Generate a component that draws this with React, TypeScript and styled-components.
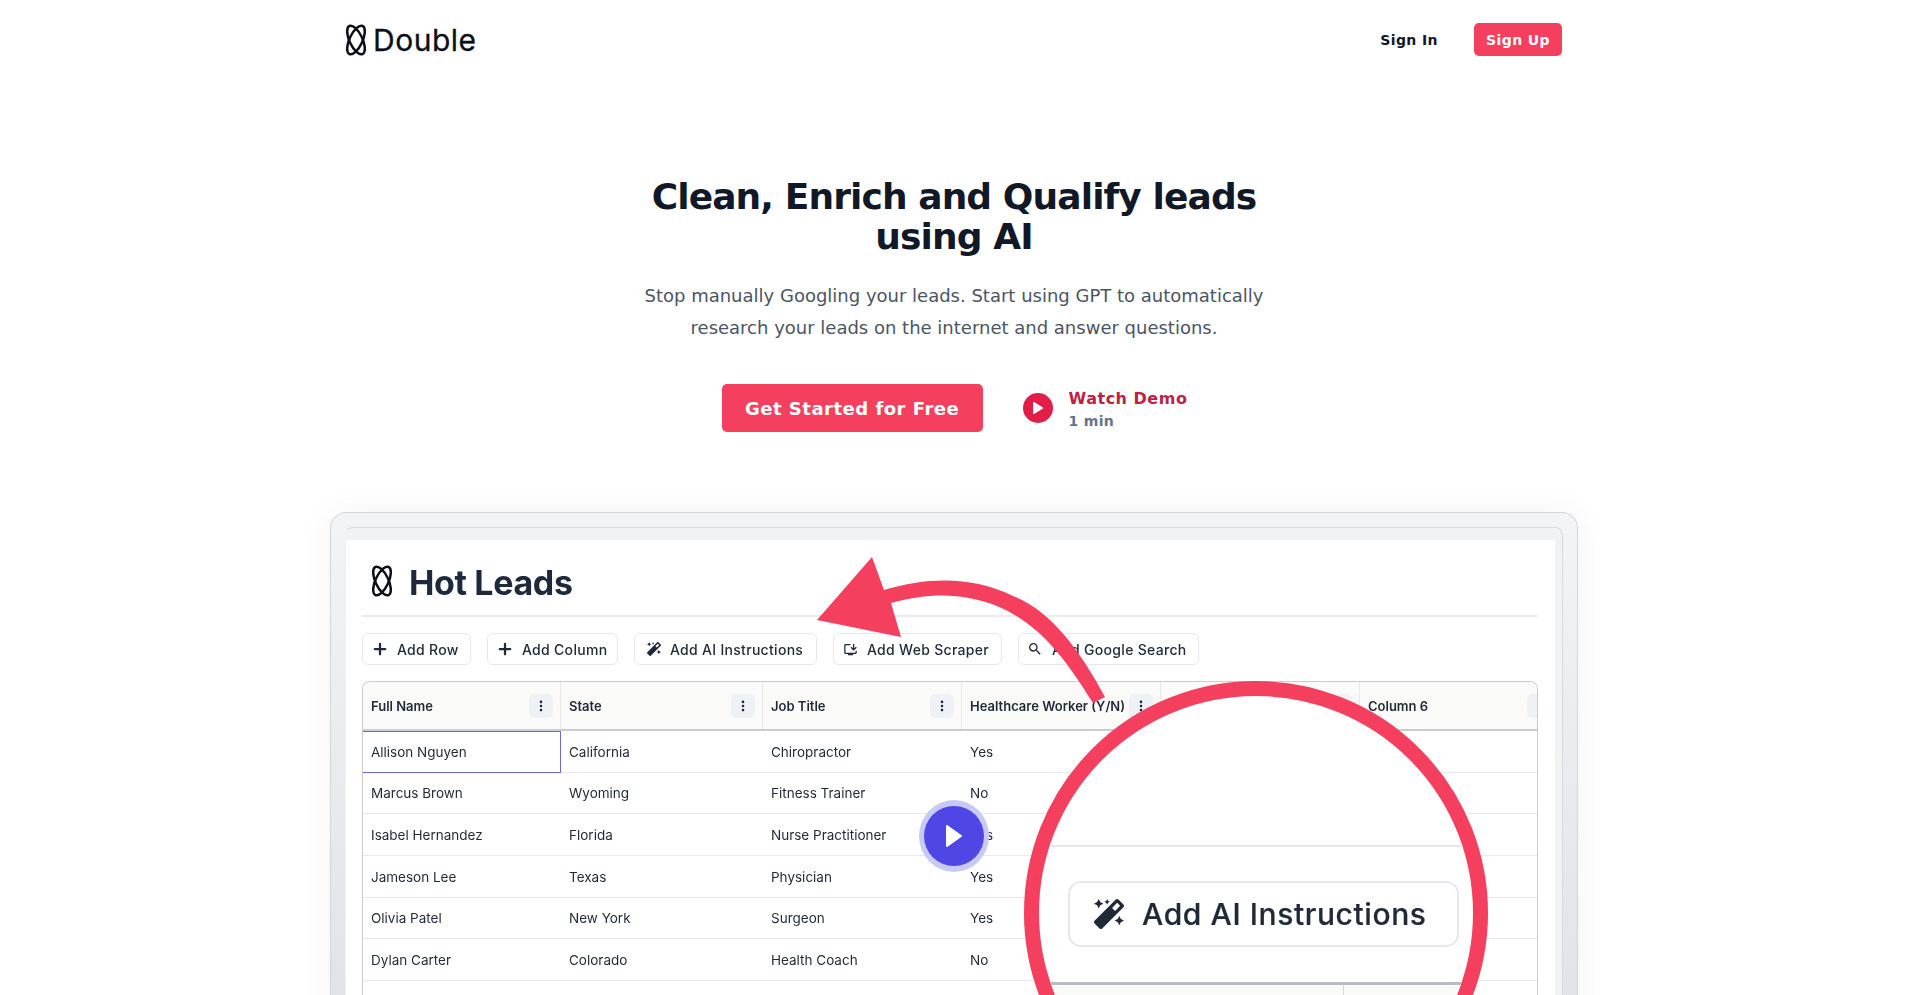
import React from 'react';
import styled, { createGlobalStyle } from 'styled-components';
import { FaMagic } from 'react-icons/fa';
import { MdOutlineInstallDesktop, MdSearch } from 'react-icons/md';
import { Plus, EllipsisVertical } from 'lucide-react';

const Global = createGlobalStyle`
  html, body { margin: 0; padding: 0; background: #fff; height: 995px; overflow: hidden; }
  * { box-sizing: border-box; }
  body { font-family: "DejaVu Sans", sans-serif; }
`;

const Page = styled.div`
  width: 1908px;
  height: 995px;
  overflow: hidden;
`;
const Container = styled.div`
  width: 1280px;
  margin: 0 auto;
  padding: 0 16px;
`;
const Nav = styled.nav`
  height: 80px;
  padding: 0 16px;
  display: flex;
  align-items: center;
  justify-content: space-between;
`;
const Brand = styled.div`
  display: flex;
  align-items: center;
  gap: 7px;
`;
const BrandName = styled.span`
  font-family: Inter, sans-serif;
  font-size: 30px;
  font-weight: 400;
  letter-spacing: 0.5px;
  color: #0b0f19;
  -webkit-text-stroke: 0.3px #0b0f19;
`;
const NavActions = styled.div`
  display: flex;
  align-items: center;
  gap: 36px;
`;
const SignIn = styled.a`
  font-size: 14px;
  font-weight: 700;
  letter-spacing: 0.4px;
  color: #111827;
`;
const SignUp = styled.a`
  height: 33px;
  width: 88px;
  margin-top: -1px;
  display: flex;
  align-items: center;
  justify-content: center;
  font-size: 14px;
  font-weight: 700;
  letter-spacing: 0.4px;
  color: #fff;
  background: #f43f5e;
  border-radius: 5px;
`;
const Hero = styled.section`
  padding-top: 97px;
  display: flex;
  flex-direction: column;
  align-items: center;
`;
const Title = styled.h1`
  margin: 0;
  width: 640px;
  text-align: center;
  font-size: 36px;
  line-height: 40px;
  font-weight: 700;
  letter-spacing: -0.9px;
  color: #111827;
`;
const Lead = styled.p`
  margin: 23px 0 0;
  width: 700px;
  text-align: center;
  font-size: 18px;
  line-height: 32px;
  color: #4b5563;
`;
const Cta = styled.div`
  margin-top: 40px;
  padding-left: 1px;
  display: flex;
  align-items: center;
  gap: 40px;
`;
const Primary = styled.a`
  width: 261px;
  height: 48px;
  display: flex;
  align-items: center;
  justify-content: center;
  background: #f43f5e;
  color: #fff;
  font-size: 18px;
  font-weight: 700;
  letter-spacing: 0.5px;
  border-radius: 5px;
`;
const Demo = styled.a`
  display: flex;
  align-items: center;
  gap: 16px;
`;
const DemoDisc = styled.span`
  width: 30px;
  height: 30px;
  border-radius: 50%;
  background: #e11d48;
  display: flex;
  align-items: center;
  justify-content: center;
`;
const DemoText = styled.span`
  padding-top: 2px;
  display: flex;
  flex-direction: column;
  gap: 1px;
`;
const DemoTitle = styled.span`
  font-size: 16px;
  line-height: 22px;
  font-weight: 700;
  letter-spacing: 0.5px;
  color: #be2148;
`;
const DemoTime = styled.span`
  font-size: 14px;
  line-height: 20px;
  font-weight: 700;
  letter-spacing: 0.3px;
  color: #64748b;
`;
const Frame = styled.div`
  margin-top: 80px;
  width: 1248px;
  border: 1px solid #d4d6da;
  border-bottom: 0;
  border-radius: 16px 16px 0 0;
  padding: 14px 14px 0;
  background: linear-gradient(#f3f4f6, #eceef0 30%, #dfe1e4);
  box-shadow: 0 0 34px rgba(0, 0, 0, 0.05);
`;
const Bezel = styled.div`
  border: 1px solid #d8dadd;
  border-bottom: 0;
  border-left-color: transparent;
  border-radius: 8px 8px 0 0;
  padding: 12px 7px 0 0;
  background: #f1f2f4;
`;
const Screen = styled.div`
  position: relative;
  height: 520px;
  background: #fff;
  padding: 16px 17px 0 16px;
  overflow: hidden;
`;
const Shot = styled.div`
  filter: blur(0.4px);
`;
const SheetHead = styled.div`
  height: 61px;
  border-bottom: 2px solid #e9ebf0;
  display: flex;
  align-items: flex-start;
  gap: 17px;
  padding: 9px 0 0 10px;
`;
const SheetTitle = styled.h2`
  margin: -1px 0 0;
  font-family: Inter, sans-serif;
  font-size: 34px;
  line-height: 38px;
  font-weight: 700;
  letter-spacing: -0.35px;
  color: #1e293b;
`;
const Toolbar = styled.div`
  margin-top: 16px;
  display: flex;
  gap: 16px;
`;
const ToolButton = styled.div<{ $w: number; $pad: number; $gap: number }>`
  width: ${p => p.$w}px;
  height: 32px;
  padding-left: ${p => p.$pad}px;
  display: flex;
  align-items: center;
  gap: ${p => p.$gap}px;
  border: 1px solid #e5e7eb;
  border-radius: 6px;
  font-family: Inter, sans-serif;
  font-size: 14px;
  font-weight: 500;
  letter-spacing: 0.3px;
  color: #1f2937;
  background: #fff;
`;
const Table = styled.div`
  margin-top: 16px;
  width: 1176px;
  border: 1px solid #c9ccd1;
  border-bottom: 0;
  border-radius: 8px 8px 0 0;
  overflow: hidden;
  font-family: Inter, sans-serif;
`;
const Row = styled.div<{ $head?: boolean }>`
  display: grid;
  grid-template-columns: 198px 202px 199px 199px 199px 199px;
  width: 1196px;
  height: ${p => (p.$head ? '49px' : '41.67px')};
  background: ${p => (p.$head ? '#fafaf9' : '#fff')};
  border-bottom: ${p => (p.$head ? '2px solid #c9ccd1' : '1.5px solid #e7e9ee')};
`;
const HeadCell = styled.div`
  display: flex;
  align-items: center;
  justify-content: space-between;
  padding: 0 7px 0 8px;
  border-right: 1px solid #e7e7e6;
  font-size: 13px;
  font-weight: 600;
  color: #1f2937;
  white-space: nowrap;
`;
const Kebab = styled.span`
  width: 24px;
  height: 24px;
  flex: none;
  border-radius: 5px;
  background: #eef2f7;
  display: flex;
  align-items: center;
  justify-content: center;
  color: #1f2937;
`;
const Cell = styled.div<{ $selected?: boolean }>`
  display: flex;
  align-items: center;
  padding: 1px 8px 0;
  font-size: 13.5px;
  color: #1f2937;
  border: ${p => (p.$selected ? '1px solid #6d66d9' : '0')};
  margin: ${p => (p.$selected ? '0 0 -1px -1px' : '0')};
`;
const ArrowLayer = styled.svg`
  position: absolute;
  left: 454px;
  top: 0;
`;
const PlayHalo = styled.div`
  position: absolute;
  left: 573px;
  top: 260px;
  width: 70px;
  height: 72px;
  border-radius: 50%;
  background: #c7c9f6;
  display: flex;
  align-items: center;
  justify-content: center;
`;
const PlayDisc = styled.div`
  width: 60px;
  height: 60px;
  border-radius: 50%;
  background: #4f46e5;
  display: flex;
  align-items: center;
  justify-content: center;
`;
const Lens = styled.div`
  position: absolute;
  left: 678px;
  top: 141px;
  width: 464px;
  height: 464px;
  border-radius: 50%;
  border: 15px solid #f43f5e;
  background: #fff;
  overflow: hidden;
  padding-top: 149px;
`;
const LensInner = styled.div`
  filter: blur(0.6px);
`;
const LensRule = styled.div`
  height: 2px;
  background: #e6e8ee;
`;
const LensButton = styled.div`
  margin: 34px 0 0 29px;
  width: 391px;
  height: 66px;
  border: 2px solid #e5e8ef;
  border-radius: 13px;
  padding-left: 24px;
  display: flex;
  align-items: center;
  gap: 18px;
  font-family: Inter, sans-serif;
  font-size: 30px;
  font-weight: 500;
  letter-spacing: 0.6px;
  color: #1f2937;
  -webkit-text-stroke: 0.2px #1f2937;
  white-space: nowrap;
`;
const LensHeader = styled.div`
  margin-top: 35px;
  height: 60px;
  border-top: 3px solid #b9bdc3;
  background: #fafaf9;
  display: flex;
`;
const LensColumn = styled.div`
  width: 305px;
  border-right: 1px solid #d8d8d6;
`;

const Logo = ({ w, h }: { w: number; h: number }) => (
  <svg width={w} height={h} viewBox="0 0 20 32" fill="none" stroke="#0b0f19" strokeWidth="2.5">
    <ellipse cx="10" cy="16" rx="6.5" ry="15.5" transform="rotate(-25 10 16)" />
    <ellipse cx="10" cy="16" rx="6.5" ry="15.5" transform="rotate(25 10 16)" />
  </svg>
);

const columns = ['Full Name', 'State', 'Job Title', 'Healthcare Worker (Y/N)', 'Column 5', 'Column 6'];
const rows = [
  ['Allison Nguyen', 'California', 'Chiropractor', 'Yes'],
  ['Marcus Brown', 'Wyoming', 'Fitness Trainer', 'No'],
  ['Isabel Hernandez', 'Florida', 'Nurse Practitioner', 'Yes'],
  ['Jameson Lee', 'Texas', 'Physician', 'Yes'],
  ['Olivia Patel', 'New York', 'Surgeon', 'Yes'],
  ['Dylan Carter', 'Colorado', 'Health Coach', 'No'],
  ['', '', '', ''],
];

export default function App() {
  return (
    <Page>
      <Global />
      <Container>
        <Nav>
          <Brand>
            <Logo w={20} h={32} />
            <BrandName>Double</BrandName>
          </Brand>
          <NavActions>
            <SignIn>Sign In</SignIn>
            <SignUp>Sign Up</SignUp>
          </NavActions>
        </Nav>
        <Hero>
          <Title>Clean, Enrich and Qualify leads using AI</Title>
          <Lead>
            Stop manually Googling your leads. Start using GPT to automatically
            <br />
            research your leads on the internet and answer questions.
          </Lead>
          <Cta>
            <Primary>Get Started for Free</Primary>
            <Demo>
              <DemoDisc>
                <svg width="12" height="14" viewBox="0 0 12 14">
                  <path d="M2 2l8 5-8 5z" fill="#fff" stroke="#fff" strokeWidth="2" strokeLinejoin="round" />
                </svg>
              </DemoDisc>
              <DemoText>
                <DemoTitle>Watch Demo</DemoTitle>
                <DemoTime>1 min</DemoTime>
              </DemoText>
            </Demo>
          </Cta>
        </Hero>
        <Frame>
          <Bezel>
            <Screen>
              <Shot>
                <SheetHead>
                  <Logo w={20} h={32} />
                  <SheetTitle>Hot Leads</SheetTitle>
                </SheetHead>
                <Toolbar>
                  <ToolButton $w={109} $pad={8} $gap={8}><Plus size={18} strokeWidth={3} />Add Row</ToolButton>
                  <ToolButton $w={131} $pad={8} $gap={8}><Plus size={18} strokeWidth={3} />Add Column</ToolButton>
                  <ToolButton $w={183} $pad={12} $gap={9}><FaMagic size={14} />Add AI Instructions</ToolButton>
                  <ToolButton $w={169} $pad={9} $gap={9}><MdOutlineInstallDesktop size={15} />Add Web Scraper</ToolButton>
                  <ToolButton $w={181} $pad={8} $gap={9}><MdSearch size={16} />Add Google Search</ToolButton>
                </Toolbar>
                <Table>
                  <Row $head>
                    {columns.map(c => (
                      <HeadCell key={c}>
                        {c}
                        <Kebab><EllipsisVertical size={14} strokeWidth={2.5} /></Kebab>
                      </HeadCell>
                    ))}
                  </Row>
                  {rows.map((r, i) => (
                    <Row key={i}>
                      {r.map((v, j) => (
                        <Cell key={j} $selected={i === 0 && j === 0}>{v}</Cell>
                      ))}
                    </Row>
                  ))}
                </Table>
              </Shot>
              <ArrowLayer width="320" height="180" viewBox="800 540 320 180">
                <path
                  d="M872 557 L817 620 L901 637 L891 603 C930 592 965 593 997 606 C1037 623 1062 653 1093 703 L1105 697 C1080 650 1050 610 1013 596 C975 577 930 576 884 590 Z"
                  fill="#f43f5e"
                />
              </ArrowLayer>
              <PlayHalo>
                <PlayDisc>
                  <svg width="18" height="24" viewBox="0 0 18 24">
                    <path d="M2 2l14 10L2 22z" fill="#fff" stroke="#fff" strokeWidth="2" strokeLinejoin="round" />
                  </svg>
                </PlayDisc>
              </PlayHalo>
              <Lens>
                <LensInner>
                  <LensRule />
                  <LensButton>
                    <FaMagic size={30} />
                    Add AI Instructions
                  </LensButton>
                  <LensHeader>
                    <LensColumn />
                  </LensHeader>
                </LensInner>
              </Lens>
            </Screen>
          </Bezel>
        </Frame>
      </Container>
    </Page>
  );
}
